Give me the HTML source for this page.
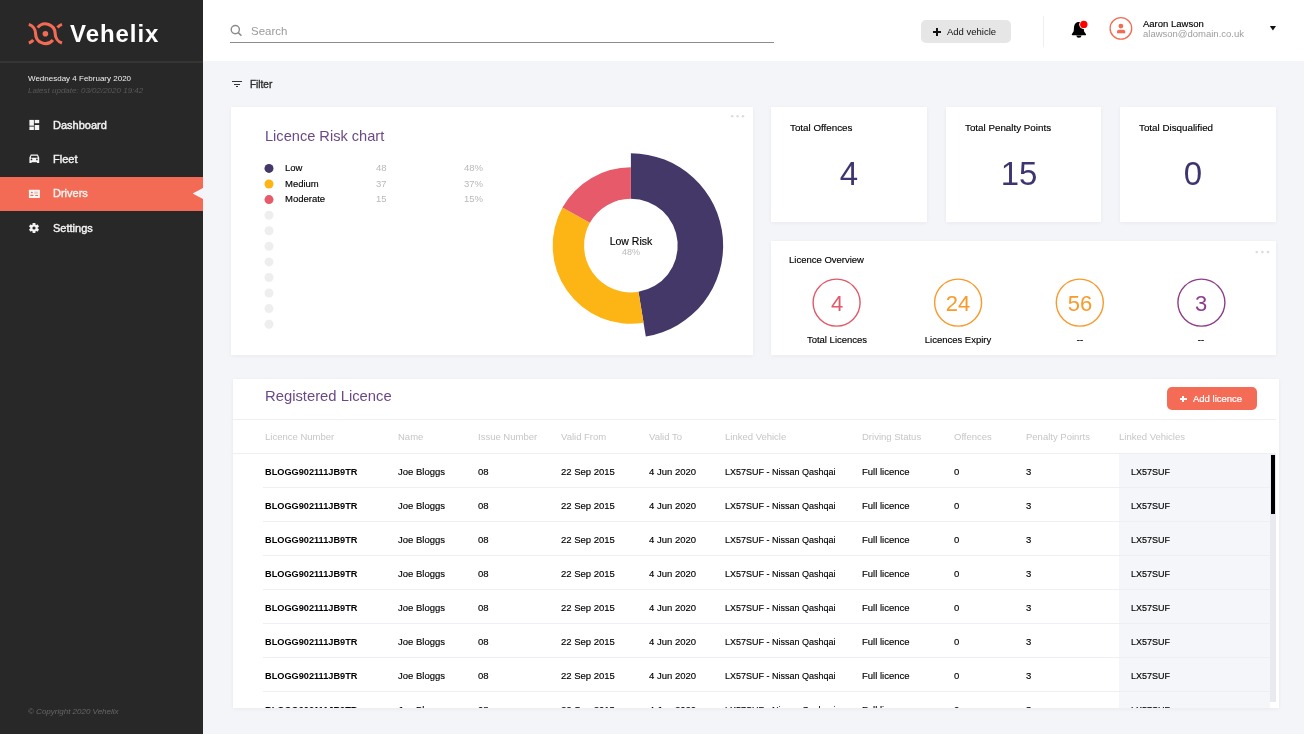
<!DOCTYPE html>
<html><head><meta charset="utf-8"><style>
html,body{margin:0;padding:0;}
body{width:1304px;height:734px;overflow:hidden;background:#f4f5f9;position:relative;font-family:"Liberation Sans", sans-serif;}
.t{position:absolute;white-space:nowrap;line-height:1em;will-change:transform;}
.r{position:absolute;}
svg.r{overflow:visible;}
</style></head><body>
<div class="r" style="left:0px;top:0px;width:203.00px;height:734.00px;background:#282828;"></div>
<div class="r" style="left:0px;top:61px;width:203.00px;height:2.00px;background:#353535;"></div>
<svg class="r" style="left:0;top:0" width="203" height="61" viewBox="0 0 203 61"><g fill="none" stroke="#f46b55" stroke-width="3.1"><path d="M28.83 24.38 A9.8 9.8 0 0 1 35.60 33.70 A9.8 9.8 0 0 0 52.91 40.00"/><path d="M37.68 27.67 A9.8 9.8 0 0 1 55.20 33.70 A9.8 9.8 0 0 0 61.97 43.02"/><path d="M57.49 27.40 A9.8 9.8 0 0 1 61.97 24.38"/><path d="M28.83 43.02 A9.8 9.8 0 0 0 33.31 40.00"/></g><circle cx="45.4" cy="33.7" r="2.8" fill="#f46b55"/></svg>
<div class="t" style="left:69.50px;top:22.00px;font-size:24px;color:#fff;font-weight:bold;letter-spacing:0.95px">Vehelix</div>
<div class="t" style="left:27.50px;top:75.00px;font-size:8px;color:#f0f0f0;">Wednesday 4 February 2020</div>
<div class="t" style="left:27.50px;top:87.00px;font-size:8px;color:#595959;font-style:italic">Latest update: 03/02/2020 19:42</div>
<div class="r" style="left:0px;top:177px;width:203.00px;height:34.00px;background:#f46b55;"></div>
<svg class="r" style="left:192px;top:186px" width="12" height="15"><path d="M0.6 7.5 L11.5 1.7 L11.5 13.3 Z" fill="#f4f5f9"/></svg>
<div class="t" style="left:52.70px;top:120.00px;font-size:11px;color:#f4f4f4;-webkit-text-stroke:0.4px #f4f4f4">Dashboard</div>
<div class="t" style="left:52.70px;top:154.00px;font-size:11px;color:#f4f4f4;-webkit-text-stroke:0.4px #f4f4f4">Fleet</div>
<div class="t" style="left:52.70px;top:188.00px;font-size:11px;color:#f4f4f4;-webkit-text-stroke:0.4px #f4f4f4">Drivers</div>
<div class="t" style="left:52.70px;top:223.00px;font-size:11px;color:#f4f4f4;-webkit-text-stroke:0.4px #f4f4f4">Settings</div>
<svg class="r" style="left:29px;top:119px" width="11" height="12" viewBox="0 0 11 12" fill="#f4f4f4"><rect x="0.4" y="0.9" width="4.5" height="5.8"/><rect x="0.4" y="7.6" width="4.5" height="3.4"/><rect x="5.7" y="0.9" width="4.5" height="3.3"/><rect x="5.7" y="6" width="4.5" height="5"/></svg>
<svg class="r" style="left:29px;top:153px" width="11" height="11" viewBox="0 0 11 11" fill="#f4f4f4"><path d="M1.8 1.6 H8.8 L10.2 4.4 V10 H8 V9.3 H2.5 V10 H0.4 V4.4 Z M2.3 2.8 L1.8 4.8 H8.7 L8.2 2.8 Z" fill-rule="evenodd"/><circle cx="2.5" cy="6.4" r="0.85" fill="#282828"/><circle cx="7.9" cy="6.4" r="0.85" fill="#282828"/></svg>
<svg class="r" style="left:28px;top:189px" width="13" height="10" viewBox="28 189 13 10"><rect x="28.9" y="189.8" width="11" height="8.2" rx="0.5" fill="#f4f4f4"/><ellipse cx="31.9" cy="192.5" rx="1" ry="0.7" fill="#f46b55"/><path d="M30.2 196 Q30.5 194.4 31.9 194.4 Q33.4 194.4 33.7 196 Z" fill="#f46b55"/><rect x="34.3" y="191.6" width="3.7" height="2.2" fill="#f46b55" opacity="0.35"/><rect x="35.3" y="195" width="2.7" height="1" fill="#f46b55"/></svg>
<svg class="r" style="left:28.2px;top:222.1px" width="12" height="12" viewBox="-6 -6 12 12" fill="#f4f4f4"><circle r="3.6"/><rect x="-1.45" y="-5.05" width="2.9" height="3" rx="0.6" transform="rotate(0)"/><rect x="-1.45" y="-5.05" width="2.9" height="3" rx="0.6" transform="rotate(60)"/><rect x="-1.45" y="-5.05" width="2.9" height="3" rx="0.6" transform="rotate(120)"/><rect x="-1.45" y="-5.05" width="2.9" height="3" rx="0.6" transform="rotate(180)"/><rect x="-1.45" y="-5.05" width="2.9" height="3" rx="0.6" transform="rotate(240)"/><rect x="-1.45" y="-5.05" width="2.9" height="3" rx="0.6" transform="rotate(300)"/><circle r="1.6" fill="#282828"/></svg>
<div class="t" style="left:27.60px;top:708.00px;font-size:8px;color:#676767;font-style:italic">© Copyright 2020 Vehelix</div>
<div class="r" style="left:203px;top:0px;width:1101.00px;height:61.00px;background:#fff;"></div>
<svg class="r" style="left:228px;top:22px" width="16" height="16" viewBox="228 22 16 16"><circle cx="235.3" cy="29.6" r="4.1" fill="none" stroke="#8a8a8a" stroke-width="1.4"/><path d="M238.3 32.6 L241.4 35.7" stroke="#8a8a8a" stroke-width="1.5"/></svg>
<div class="t" style="left:250.70px;top:26.00px;font-size:11.5px;color:#9a9a9a;">Search</div>
<div class="r" style="left:230px;top:42px;width:544.00px;height:1.00px;background:#8c8c8c;"></div>
<div class="r" style="left:921px;top:20px;width:90.00px;height:23.40px;background:#e6e6e6;border-radius:5px"></div>
<div class="r" style="left:933.3px;top:31.2px;width:7.40px;height:1.60px;background:#111;"></div>
<div class="r" style="left:936.2px;top:28.4px;width:1.60px;height:7.20px;background:#111;"></div>
<div class="t" style="left:947.10px;top:27.00px;font-size:9.5px;color:#111;">Add vehicle</div>
<div class="r" style="left:1043px;top:16px;width:1.00px;height:31.00px;background:#efefef;"></div>
<svg class="r" style="left:1068px;top:18px" width="24" height="24" viewBox="1068 18 24 24"><path d="M1078.9 22 C1075.5 22 1074.2 24.6 1074 27.5 L1073.7 31.3 L1071.8 34.2 Q1071.5 35.3 1072.6 35.3 L1085.3 35.3 Q1086.4 35.3 1086 34.2 L1084 31.3 L1083.8 28.5 Q1079.5 27.6 1080.2 22.1 Z" fill="#000"/><path d="M1076.3 35.6 A2.6 2.2 0 0 0 1081.5 35.6 Z" fill="#000"/><circle cx="1083.8" cy="24.4" r="4.6" fill="#fff"/><circle cx="1083.8" cy="24.4" r="3.7" fill="#ff0000"/></svg>
<svg class="r" style="left:1106px;top:14px" width="30" height="30" viewBox="1106 14 30 30"><circle cx="1120.9" cy="28.4" r="10.8" fill="none" stroke="#f46b55" stroke-width="1.3"/><circle cx="1120.9" cy="26.1" r="2.4" fill="#f46b55"/><path d="M1117 33.3 L1117 31.6 Q1117 29.8 1119 29.8 L1123.2 29.8 Q1125.2 29.8 1125.2 31.6 L1125.2 33.3 Z" fill="#f46b55"/></svg>
<div class="t" style="left:1142.70px;top:19.00px;font-size:9.5px;color:#000;-webkit-text-stroke:0.15px #000">Aaron Lawson</div>
<div class="t" style="left:1142.70px;top:29.00px;font-size:9.5px;color:#9d9d9d;">alawson@domain.co.uk</div>
<svg class="r" style="left:1268px;top:25px" width="10" height="7"><path d="M1.8 0.9 L8 0.9 L4.9 5.6 Z" fill="#111"/></svg>
<div class="r" style="left:232px;top:80.7px;width:9.50px;height:1.30px;background:#333;"></div>
<div class="r" style="left:234.3px;top:83.8px;width:5.60px;height:1.30px;background:#333;"></div>
<div class="r" style="left:236.2px;top:86.2px;width:2.00px;height:1.30px;background:#333;"></div>
<div class="t" style="left:249.80px;top:80.00px;font-size:10px;color:#2e2e2e;-webkit-text-stroke:0.35px #2e2e2e">Filter</div>
<div class="r" style="left:231px;top:107px;width:522.00px;height:247.50px;background:#fff;box-shadow:0 1px 4px rgba(40,40,80,0.05)"></div>
<div class="t" style="left:265.40px;top:129.00px;font-size:14.6px;color:#6b4887;">Licence Risk chart</div>
<svg class="r" style="left:0;top:0" width="760" height="360"><circle cx="269" cy="168.40" r="4.5" fill="#433868"/><circle cx="269" cy="183.98" r="4.5" fill="#fdb515"/><circle cx="269" cy="199.56" r="4.5" fill="#e65a6a"/><circle cx="269" cy="215.14" r="4.5" fill="#eeeeee"/><circle cx="269" cy="230.72" r="4.5" fill="#eeeeee"/><circle cx="269" cy="246.30" r="4.5" fill="#eeeeee"/><circle cx="269" cy="261.88" r="4.5" fill="#eeeeee"/><circle cx="269" cy="277.46" r="4.5" fill="#eeeeee"/><circle cx="269" cy="293.04" r="4.5" fill="#eeeeee"/><circle cx="269" cy="308.62" r="4.5" fill="#eeeeee"/><circle cx="269" cy="324.20" r="4.5" fill="#eeeeee"/><circle cx="732.2" cy="116.2" r="1.3" fill="#dddddd"/><circle cx="737.6" cy="116.2" r="1.3" fill="#dddddd"/><circle cx="743" cy="116.2" r="1.3" fill="#dddddd"/></svg>
<div class="t" style="left:284.80px;top:163.00px;font-size:9.5px;color:#000;-webkit-text-stroke:0.15px #000">Low</div>
<div class="t" style="left:376.40px;top:163.00px;font-size:9.5px;color:#b9b9b9;">48</div>
<div class="t" style="left:464.00px;top:163.00px;font-size:9.5px;color:#b9b9b9;">48%</div>
<div class="t" style="left:284.80px;top:179.00px;font-size:9.5px;color:#000;-webkit-text-stroke:0.15px #000">Medium</div>
<div class="t" style="left:376.40px;top:179.00px;font-size:9.5px;color:#b9b9b9;">37</div>
<div class="t" style="left:464.00px;top:179.00px;font-size:9.5px;color:#b9b9b9;">37%</div>
<div class="t" style="left:284.80px;top:194.00px;font-size:9.5px;color:#000;-webkit-text-stroke:0.15px #000">Moderate</div>
<div class="t" style="left:376.40px;top:194.00px;font-size:9.5px;color:#b9b9b9;">15</div>
<div class="t" style="left:464.00px;top:194.00px;font-size:9.5px;color:#b9b9b9;">15%</div>
<svg class="r" style="left:0;top:0" width="760" height="360"><path d="M630.90 153.30 A92.25 92.25 0 0 1 645.81 336.59 L638.47 291.78 A46.85 46.85 0 0 0 630.90 198.70 Z" fill="#433868"/><path d="M643.55 322.77 A78.25 78.25 0 0 1 562.46 207.61 L589.92 222.84 A46.85 46.85 0 0 0 638.47 291.78 Z" fill="#fdb515"/><path d="M562.46 207.61 A78.25 78.25 0 0 1 630.90 167.30 L630.90 198.70 A46.85 46.85 0 0 0 589.92 222.84 Z" fill="#e65a6a"/></svg>
<div class="t" style="left:580.90px;top:236.00px;width:100px;text-align:center;font-size:10.5px;color:#000;-webkit-text-stroke:0.15px #000">Low Risk</div>
<div class="t" style="left:580.90px;top:248.00px;width:100px;text-align:center;font-size:9px;color:#b9b9b9;">48%</div>
<div class="r" style="left:771px;top:107.2px;width:155.50px;height:114.60px;background:#fff;box-shadow:0 1px 4px rgba(40,40,80,0.05)"></div>
<div class="t" style="left:790.00px;top:123.00px;font-size:9.8px;color:#000;-webkit-text-stroke:0.15px #000">Total Offences</div>
<div class="t" style="left:799.00px;top:157.00px;width:100px;text-align:center;font-size:33px;color:#3e3570;">4</div>
<div class="r" style="left:945.8px;top:107.2px;width:155.00px;height:114.60px;background:#fff;box-shadow:0 1px 4px rgba(40,40,80,0.05)"></div>
<div class="t" style="left:964.80px;top:123.00px;font-size:9.8px;color:#000;-webkit-text-stroke:0.15px #000">Total Penalty Points</div>
<div class="t" style="left:968.75px;top:157.00px;width:100px;text-align:center;font-size:33px;color:#3e3570;">15</div>
<div class="r" style="left:1120.3px;top:107.2px;width:155.70px;height:114.60px;background:#fff;box-shadow:0 1px 4px rgba(40,40,80,0.05)"></div>
<div class="t" style="left:1139.30px;top:123.00px;font-size:9.8px;color:#000;-webkit-text-stroke:0.15px #000">Total Disqualified</div>
<div class="t" style="left:1142.80px;top:157.00px;width:100px;text-align:center;font-size:33px;color:#3e3570;">0</div>
<div class="r" style="left:771px;top:241px;width:505.20px;height:114.00px;background:#fff;box-shadow:0 1px 4px rgba(40,40,80,0.05)"></div>
<div class="t" style="left:789.30px;top:255.00px;font-size:9.5px;color:#000;-webkit-text-stroke:0.15px #000">Licence Overview</div>
<svg class="r" style="left:1250px;top:248px" width="24" height="8" viewBox="1250 248 24 8"><circle cx="1256.8" cy="252.1" r="1.3" fill="#dddddd"/><circle cx="1262.4" cy="252.1" r="1.3" fill="#dddddd"/><circle cx="1268" cy="252.1" r="1.3" fill="#dddddd"/></svg>
<div class="t" style="left:806.60px;top:293.00px;width:60px;text-align:center;font-size:22px;color:#e25868;">4</div>
<div class="t" style="left:776.60px;top:335.00px;width:120px;text-align:center;font-size:9.5px;color:#000;-webkit-text-stroke:0.15px #000">Total Licences</div>
<div class="t" style="left:928.10px;top:293.00px;width:60px;text-align:center;font-size:22px;color:#f89a2c;">24</div>
<div class="t" style="left:898.10px;top:335.00px;width:120px;text-align:center;font-size:9.5px;color:#000;-webkit-text-stroke:0.15px #000">Licences Expiry</div>
<div class="t" style="left:1049.80px;top:293.00px;width:60px;text-align:center;font-size:22px;color:#f89a2c;">56</div>
<div class="t" style="left:1019.80px;top:335.00px;width:120px;text-align:center;font-size:9.5px;color:#000;-webkit-text-stroke:0.15px #000">--</div>
<div class="t" style="left:1171.40px;top:293.00px;width:60px;text-align:center;font-size:22px;color:#8e3d8b;">3</div>
<div class="t" style="left:1141.40px;top:335.00px;width:120px;text-align:center;font-size:9.5px;color:#000;-webkit-text-stroke:0.15px #000">--</div>
<svg class="r" style="left:0;top:0" width="1304" height="400"><circle cx="836.6" cy="302.6" r="23.5" fill="none" stroke="#e25868" stroke-width="1.4"/><circle cx="958.1" cy="302.6" r="23.5" fill="none" stroke="#f89a2c" stroke-width="1.4"/><circle cx="1079.8" cy="302.6" r="23.5" fill="none" stroke="#f89a2c" stroke-width="1.4"/><circle cx="1201.4" cy="302.6" r="23.5" fill="none" stroke="#8e3d8b" stroke-width="1.4"/></svg>
<div class="r" style="left:233px;top:379px;width:1045.50px;height:328.70px;background:#fff;box-shadow:0 1px 4px rgba(40,40,80,0.05)"></div>
<div class="t" style="left:265.40px;top:389.00px;font-size:14.8px;color:#6b4887;">Registered Licence</div>
<div class="r" style="left:1167.2px;top:386.8px;width:89.70px;height:23.60px;background:#f46b56;border-radius:5px"></div>
<div class="r" style="left:1179.6px;top:398.4px;width:7.00px;height:1.40px;background:#fff;"></div>
<div class="r" style="left:1182.4px;top:395.7px;width:1.40px;height:6.80px;background:#fff;"></div>
<div class="t" style="left:1193.20px;top:394.00px;font-size:9.5px;color:#fff;-webkit-text-stroke:0.2px #fff">Add licence</div>
<div class="r" style="left:231px;top:419px;width:1045.30px;height:1.00px;background:#eeeef4;"></div>
<div class="t" style="left:265.40px;top:432.00px;font-size:9.5px;color:#c6c6c6;">Licence Number</div>
<div class="t" style="left:397.60px;top:432.00px;font-size:9.5px;color:#c6c6c6;">Name</div>
<div class="t" style="left:478.10px;top:432.00px;font-size:9.5px;color:#c6c6c6;">Issue Number</div>
<div class="t" style="left:561.00px;top:432.00px;font-size:9.5px;color:#c6c6c6;">Valid From</div>
<div class="t" style="left:648.60px;top:432.00px;font-size:9.5px;color:#c6c6c6;">Valid To</div>
<div class="t" style="left:724.60px;top:432.00px;font-size:9.5px;color:#c6c6c6;">Linked Vehicle</div>
<div class="t" style="left:862.30px;top:432.00px;font-size:9.5px;color:#c6c6c6;">Driving Status</div>
<div class="t" style="left:953.60px;top:432.00px;font-size:9.5px;color:#c6c6c6;">Offences</div>
<div class="t" style="left:1025.50px;top:432.00px;font-size:9.5px;color:#c6c6c6;">Penalty Poinrts</div>
<div class="t" style="left:1119.10px;top:432.00px;font-size:9.5px;color:#c6c6c6;">Linked Vehicles</div>
<div class="r" style="left:231px;top:453px;width:1045.30px;height:1.00px;background:#eeeef4;"></div>
<div class="r" style="left:0;top:454px;width:1304px;height:253.7px;overflow:hidden">
<div class="r" style="left:1119.1px;top:0px;width:150.90px;height:260.00px;background:#f5f6f9;"></div>
<div class="t" style="left:265.40px;top:14.00px;font-size:9.2px;color:#000;font-weight:bold">BLOGG902111JB9TR</div>
<div class="t" style="left:397.60px;top:13.00px;font-size:9.5px;color:#000;-webkit-text-stroke:0.15px #000">Joe Bloggs</div>
<div class="t" style="left:478.10px;top:13.00px;font-size:9.5px;color:#000;-webkit-text-stroke:0.15px #000">08</div>
<div class="t" style="left:561.00px;top:13.00px;font-size:9.5px;color:#000;-webkit-text-stroke:0.15px #000">22 Sep 2015</div>
<div class="t" style="left:648.60px;top:13.00px;font-size:9.5px;color:#000;-webkit-text-stroke:0.15px #000">4 Jun 2020</div>
<div class="t" style="left:724.60px;top:14.00px;font-size:9px;color:#000;-webkit-text-stroke:0.15px #000">LX57SUF - Nissan Qashqai</div>
<div class="t" style="left:862.30px;top:13.00px;font-size:9.5px;color:#000;-webkit-text-stroke:0.15px #000">Full licence</div>
<div class="t" style="left:953.60px;top:13.00px;font-size:9.5px;color:#000;-webkit-text-stroke:0.15px #000">0</div>
<div class="t" style="left:1025.50px;top:13.00px;font-size:9.5px;color:#000;-webkit-text-stroke:0.15px #000">3</div>
<div class="t" style="left:1130.70px;top:14.00px;font-size:9px;color:#000;-webkit-text-stroke:0.15px #000">LX57SUF</div>
<div class="r" style="left:263px;top:33.0px;width:1007.00px;height:1.00px;background:#eeeef4;"></div>
<div class="t" style="left:265.40px;top:48.00px;font-size:9.2px;color:#000;font-weight:bold">BLOGG902111JB9TR</div>
<div class="t" style="left:397.60px;top:47.00px;font-size:9.5px;color:#000;-webkit-text-stroke:0.15px #000">Joe Bloggs</div>
<div class="t" style="left:478.10px;top:47.00px;font-size:9.5px;color:#000;-webkit-text-stroke:0.15px #000">08</div>
<div class="t" style="left:561.00px;top:47.00px;font-size:9.5px;color:#000;-webkit-text-stroke:0.15px #000">22 Sep 2015</div>
<div class="t" style="left:648.60px;top:47.00px;font-size:9.5px;color:#000;-webkit-text-stroke:0.15px #000">4 Jun 2020</div>
<div class="t" style="left:724.60px;top:48.00px;font-size:9px;color:#000;-webkit-text-stroke:0.15px #000">LX57SUF - Nissan Qashqai</div>
<div class="t" style="left:862.30px;top:47.00px;font-size:9.5px;color:#000;-webkit-text-stroke:0.15px #000">Full licence</div>
<div class="t" style="left:953.60px;top:47.00px;font-size:9.5px;color:#000;-webkit-text-stroke:0.15px #000">0</div>
<div class="t" style="left:1025.50px;top:47.00px;font-size:9.5px;color:#000;-webkit-text-stroke:0.15px #000">3</div>
<div class="t" style="left:1130.70px;top:48.00px;font-size:9px;color:#000;-webkit-text-stroke:0.15px #000">LX57SUF</div>
<div class="r" style="left:263px;top:67.0px;width:1007.00px;height:1.00px;background:#eeeef4;"></div>
<div class="t" style="left:265.40px;top:82.00px;font-size:9.2px;color:#000;font-weight:bold">BLOGG902111JB9TR</div>
<div class="t" style="left:397.60px;top:81.00px;font-size:9.5px;color:#000;-webkit-text-stroke:0.15px #000">Joe Bloggs</div>
<div class="t" style="left:478.10px;top:81.00px;font-size:9.5px;color:#000;-webkit-text-stroke:0.15px #000">08</div>
<div class="t" style="left:561.00px;top:81.00px;font-size:9.5px;color:#000;-webkit-text-stroke:0.15px #000">22 Sep 2015</div>
<div class="t" style="left:648.60px;top:81.00px;font-size:9.5px;color:#000;-webkit-text-stroke:0.15px #000">4 Jun 2020</div>
<div class="t" style="left:724.60px;top:82.00px;font-size:9px;color:#000;-webkit-text-stroke:0.15px #000">LX57SUF - Nissan Qashqai</div>
<div class="t" style="left:862.30px;top:81.00px;font-size:9.5px;color:#000;-webkit-text-stroke:0.15px #000">Full licence</div>
<div class="t" style="left:953.60px;top:81.00px;font-size:9.5px;color:#000;-webkit-text-stroke:0.15px #000">0</div>
<div class="t" style="left:1025.50px;top:81.00px;font-size:9.5px;color:#000;-webkit-text-stroke:0.15px #000">3</div>
<div class="t" style="left:1130.70px;top:82.00px;font-size:9px;color:#000;-webkit-text-stroke:0.15px #000">LX57SUF</div>
<div class="r" style="left:263px;top:101.0px;width:1007.00px;height:1.00px;background:#eeeef4;"></div>
<div class="t" style="left:265.40px;top:116.00px;font-size:9.2px;color:#000;font-weight:bold">BLOGG902111JB9TR</div>
<div class="t" style="left:397.60px;top:115.00px;font-size:9.5px;color:#000;-webkit-text-stroke:0.15px #000">Joe Bloggs</div>
<div class="t" style="left:478.10px;top:115.00px;font-size:9.5px;color:#000;-webkit-text-stroke:0.15px #000">08</div>
<div class="t" style="left:561.00px;top:115.00px;font-size:9.5px;color:#000;-webkit-text-stroke:0.15px #000">22 Sep 2015</div>
<div class="t" style="left:648.60px;top:115.00px;font-size:9.5px;color:#000;-webkit-text-stroke:0.15px #000">4 Jun 2020</div>
<div class="t" style="left:724.60px;top:116.00px;font-size:9px;color:#000;-webkit-text-stroke:0.15px #000">LX57SUF - Nissan Qashqai</div>
<div class="t" style="left:862.30px;top:115.00px;font-size:9.5px;color:#000;-webkit-text-stroke:0.15px #000">Full licence</div>
<div class="t" style="left:953.60px;top:115.00px;font-size:9.5px;color:#000;-webkit-text-stroke:0.15px #000">0</div>
<div class="t" style="left:1025.50px;top:115.00px;font-size:9.5px;color:#000;-webkit-text-stroke:0.15px #000">3</div>
<div class="t" style="left:1130.70px;top:116.00px;font-size:9px;color:#000;-webkit-text-stroke:0.15px #000">LX57SUF</div>
<div class="r" style="left:263px;top:135.0px;width:1007.00px;height:1.00px;background:#eeeef4;"></div>
<div class="t" style="left:265.40px;top:150.00px;font-size:9.2px;color:#000;font-weight:bold">BLOGG902111JB9TR</div>
<div class="t" style="left:397.60px;top:149.00px;font-size:9.5px;color:#000;-webkit-text-stroke:0.15px #000">Joe Bloggs</div>
<div class="t" style="left:478.10px;top:149.00px;font-size:9.5px;color:#000;-webkit-text-stroke:0.15px #000">08</div>
<div class="t" style="left:561.00px;top:149.00px;font-size:9.5px;color:#000;-webkit-text-stroke:0.15px #000">22 Sep 2015</div>
<div class="t" style="left:648.60px;top:149.00px;font-size:9.5px;color:#000;-webkit-text-stroke:0.15px #000">4 Jun 2020</div>
<div class="t" style="left:724.60px;top:150.00px;font-size:9px;color:#000;-webkit-text-stroke:0.15px #000">LX57SUF - Nissan Qashqai</div>
<div class="t" style="left:862.30px;top:149.00px;font-size:9.5px;color:#000;-webkit-text-stroke:0.15px #000">Full licence</div>
<div class="t" style="left:953.60px;top:149.00px;font-size:9.5px;color:#000;-webkit-text-stroke:0.15px #000">0</div>
<div class="t" style="left:1025.50px;top:149.00px;font-size:9.5px;color:#000;-webkit-text-stroke:0.15px #000">3</div>
<div class="t" style="left:1130.70px;top:150.00px;font-size:9px;color:#000;-webkit-text-stroke:0.15px #000">LX57SUF</div>
<div class="r" style="left:263px;top:169.0px;width:1007.00px;height:1.00px;background:#eeeef4;"></div>
<div class="t" style="left:265.40px;top:184.00px;font-size:9.2px;color:#000;font-weight:bold">BLOGG902111JB9TR</div>
<div class="t" style="left:397.60px;top:183.00px;font-size:9.5px;color:#000;-webkit-text-stroke:0.15px #000">Joe Bloggs</div>
<div class="t" style="left:478.10px;top:183.00px;font-size:9.5px;color:#000;-webkit-text-stroke:0.15px #000">08</div>
<div class="t" style="left:561.00px;top:183.00px;font-size:9.5px;color:#000;-webkit-text-stroke:0.15px #000">22 Sep 2015</div>
<div class="t" style="left:648.60px;top:183.00px;font-size:9.5px;color:#000;-webkit-text-stroke:0.15px #000">4 Jun 2020</div>
<div class="t" style="left:724.60px;top:184.00px;font-size:9px;color:#000;-webkit-text-stroke:0.15px #000">LX57SUF - Nissan Qashqai</div>
<div class="t" style="left:862.30px;top:183.00px;font-size:9.5px;color:#000;-webkit-text-stroke:0.15px #000">Full licence</div>
<div class="t" style="left:953.60px;top:183.00px;font-size:9.5px;color:#000;-webkit-text-stroke:0.15px #000">0</div>
<div class="t" style="left:1025.50px;top:183.00px;font-size:9.5px;color:#000;-webkit-text-stroke:0.15px #000">3</div>
<div class="t" style="left:1130.70px;top:184.00px;font-size:9px;color:#000;-webkit-text-stroke:0.15px #000">LX57SUF</div>
<div class="r" style="left:263px;top:203.0px;width:1007.00px;height:1.00px;background:#eeeef4;"></div>
<div class="t" style="left:265.40px;top:218.00px;font-size:9.2px;color:#000;font-weight:bold">BLOGG902111JB9TR</div>
<div class="t" style="left:397.60px;top:217.00px;font-size:9.5px;color:#000;-webkit-text-stroke:0.15px #000">Joe Bloggs</div>
<div class="t" style="left:478.10px;top:217.00px;font-size:9.5px;color:#000;-webkit-text-stroke:0.15px #000">08</div>
<div class="t" style="left:561.00px;top:217.00px;font-size:9.5px;color:#000;-webkit-text-stroke:0.15px #000">22 Sep 2015</div>
<div class="t" style="left:648.60px;top:217.00px;font-size:9.5px;color:#000;-webkit-text-stroke:0.15px #000">4 Jun 2020</div>
<div class="t" style="left:724.60px;top:218.00px;font-size:9px;color:#000;-webkit-text-stroke:0.15px #000">LX57SUF - Nissan Qashqai</div>
<div class="t" style="left:862.30px;top:217.00px;font-size:9.5px;color:#000;-webkit-text-stroke:0.15px #000">Full licence</div>
<div class="t" style="left:953.60px;top:217.00px;font-size:9.5px;color:#000;-webkit-text-stroke:0.15px #000">0</div>
<div class="t" style="left:1025.50px;top:217.00px;font-size:9.5px;color:#000;-webkit-text-stroke:0.15px #000">3</div>
<div class="t" style="left:1130.70px;top:218.00px;font-size:9px;color:#000;-webkit-text-stroke:0.15px #000">LX57SUF</div>
<div class="r" style="left:263px;top:237.0px;width:1007.00px;height:1.00px;background:#eeeef4;"></div>
<div class="t" style="left:265.40px;top:252.00px;font-size:9.2px;color:#000;font-weight:bold">BLOGG902111JB9TR</div>
<div class="t" style="left:397.60px;top:251.00px;font-size:9.5px;color:#000;-webkit-text-stroke:0.15px #000">Joe Bloggs</div>
<div class="t" style="left:478.10px;top:251.00px;font-size:9.5px;color:#000;-webkit-text-stroke:0.15px #000">08</div>
<div class="t" style="left:561.00px;top:251.00px;font-size:9.5px;color:#000;-webkit-text-stroke:0.15px #000">22 Sep 2015</div>
<div class="t" style="left:648.60px;top:251.00px;font-size:9.5px;color:#000;-webkit-text-stroke:0.15px #000">4 Jun 2020</div>
<div class="t" style="left:724.60px;top:252.00px;font-size:9px;color:#000;-webkit-text-stroke:0.15px #000">LX57SUF - Nissan Qashqai</div>
<div class="t" style="left:862.30px;top:251.00px;font-size:9.5px;color:#000;-webkit-text-stroke:0.15px #000">Full licence</div>
<div class="t" style="left:953.60px;top:251.00px;font-size:9.5px;color:#000;-webkit-text-stroke:0.15px #000">0</div>
<div class="t" style="left:1025.50px;top:251.00px;font-size:9.5px;color:#000;-webkit-text-stroke:0.15px #000">3</div>
<div class="t" style="left:1130.70px;top:252.00px;font-size:9px;color:#000;-webkit-text-stroke:0.15px #000">LX57SUF</div>
<div class="r" style="left:263px;top:271.0px;width:1007.00px;height:1.00px;background:#eeeef4;"></div>
</div>
<div class="r" style="left:1270px;top:453.5px;width:6.00px;height:248.00px;background:#e9eaef;"></div>
<div class="r" style="left:1271px;top:455px;width:4.00px;height:59.20px;background:#000;"></div>
</body></html>
